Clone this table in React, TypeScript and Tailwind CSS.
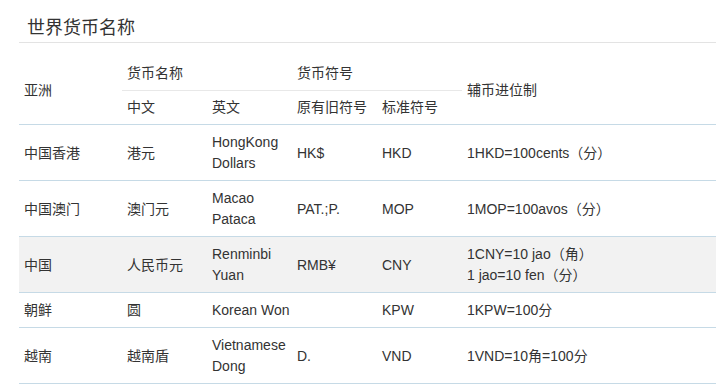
const rows = [
  { region: '中国香港', cn: '港元', en: ['HongKong', 'Dollars'], old: 'HK$', code: 'HKD', sub: ['1HKD=100cents（分）'] },
  { region: '中国澳门', cn: '澳门元', en: ['Macao', 'Pataca'], old: 'PAT.;P.', code: 'MOP', sub: ['1MOP=100avos（分）'] },
  { region: '中国', cn: '人民币元', en: ['Renminbi', 'Yuan'], old: 'RMB¥', code: 'CNY', sub: ['1CNY=10 jao（角）', '1 jao=10 fen（分）'], shaded: true },
  { region: '朝鲜', cn: '圆', en: ['Korean Won'], old: '', code: 'KPW', sub: ['1KPW=100分'] },
  { region: '越南', cn: '越南盾', en: ['Vietnamese', 'Dong'], old: 'D.', code: 'VND', sub: ['1VND=10角=100分'] },
];

const head = 'whitespace-nowrap px-[5px] py-[6px] align-middle text-left font-normal';
const cell = 'whitespace-nowrap px-[5px] pt-[7px] pb-[6px] align-middle text-left';

export default function App() {
  return (
    <div className="min-h-[386px] w-[716px] overflow-hidden bg-white pl-[19px] pt-[15px] text-[14px] leading-[21px] text-[#333] [font-family:'Liberation_Sans','Noto_Sans_CJK_SC',sans-serif]">
      <h2 className="border-b border-[#e3e3e3] pl-[8px] text-[18px] leading-[27px] font-normal text-[#333]">世界货币名称</h2>

      <table className="mt-[14px] w-[697px] table-fixed border-collapse">
        <colgroup>
          <col className="w-[103px]" />
          <col className="w-[85px]" />
          <col className="w-[85px]" />
          <col className="w-[85px]" />
          <col className="w-[85px]" />
          <col />
        </colgroup>
        <thead>
          <tr>
            <th rowSpan={2} className={`${head} border-b border-[#c6dae6]`}>亚洲</th>
            <th colSpan={2} className={`${head} border-b border-[#e8e8e8]`}>货币名称</th>
            <th colSpan={2} className={`${head} border-b border-[#e8e8e8]`}>货币符号</th>
            <th rowSpan={2} className={`${head} border-b border-[#c6dae6]`}>辅币进位制</th>
          </tr>
          <tr className="border-b border-[#c6dae6]">
            <th className={head}>中文</th>
            <th className={head}>英文</th>
            <th className={head}>原有旧符号</th>
            <th className={head}>标准符号</th>
          </tr>
        </thead>
        <tbody>
          {rows.map((r) => (
            <tr key={r.code} className={`border-b border-[#c6dae6] ${r.shaded ? 'bg-[#f2f2f2]' : ''}`}>
              <td className={cell}>{r.region}</td>
              <td className={cell}>{r.cn}</td>
              <td className={cell}>
                {r.en.map((l) => (
                  <div key={l}>{l}</div>
                ))}
              </td>
              <td className={cell}>{r.old}</td>
              <td className={cell}>{r.code}</td>
              <td className={cell}>
                {r.sub.map((l) => (
                  <div key={l}>{l}</div>
                ))}
              </td>
            </tr>
          ))}
        </tbody>
      </table>
    </div>
  );
}
